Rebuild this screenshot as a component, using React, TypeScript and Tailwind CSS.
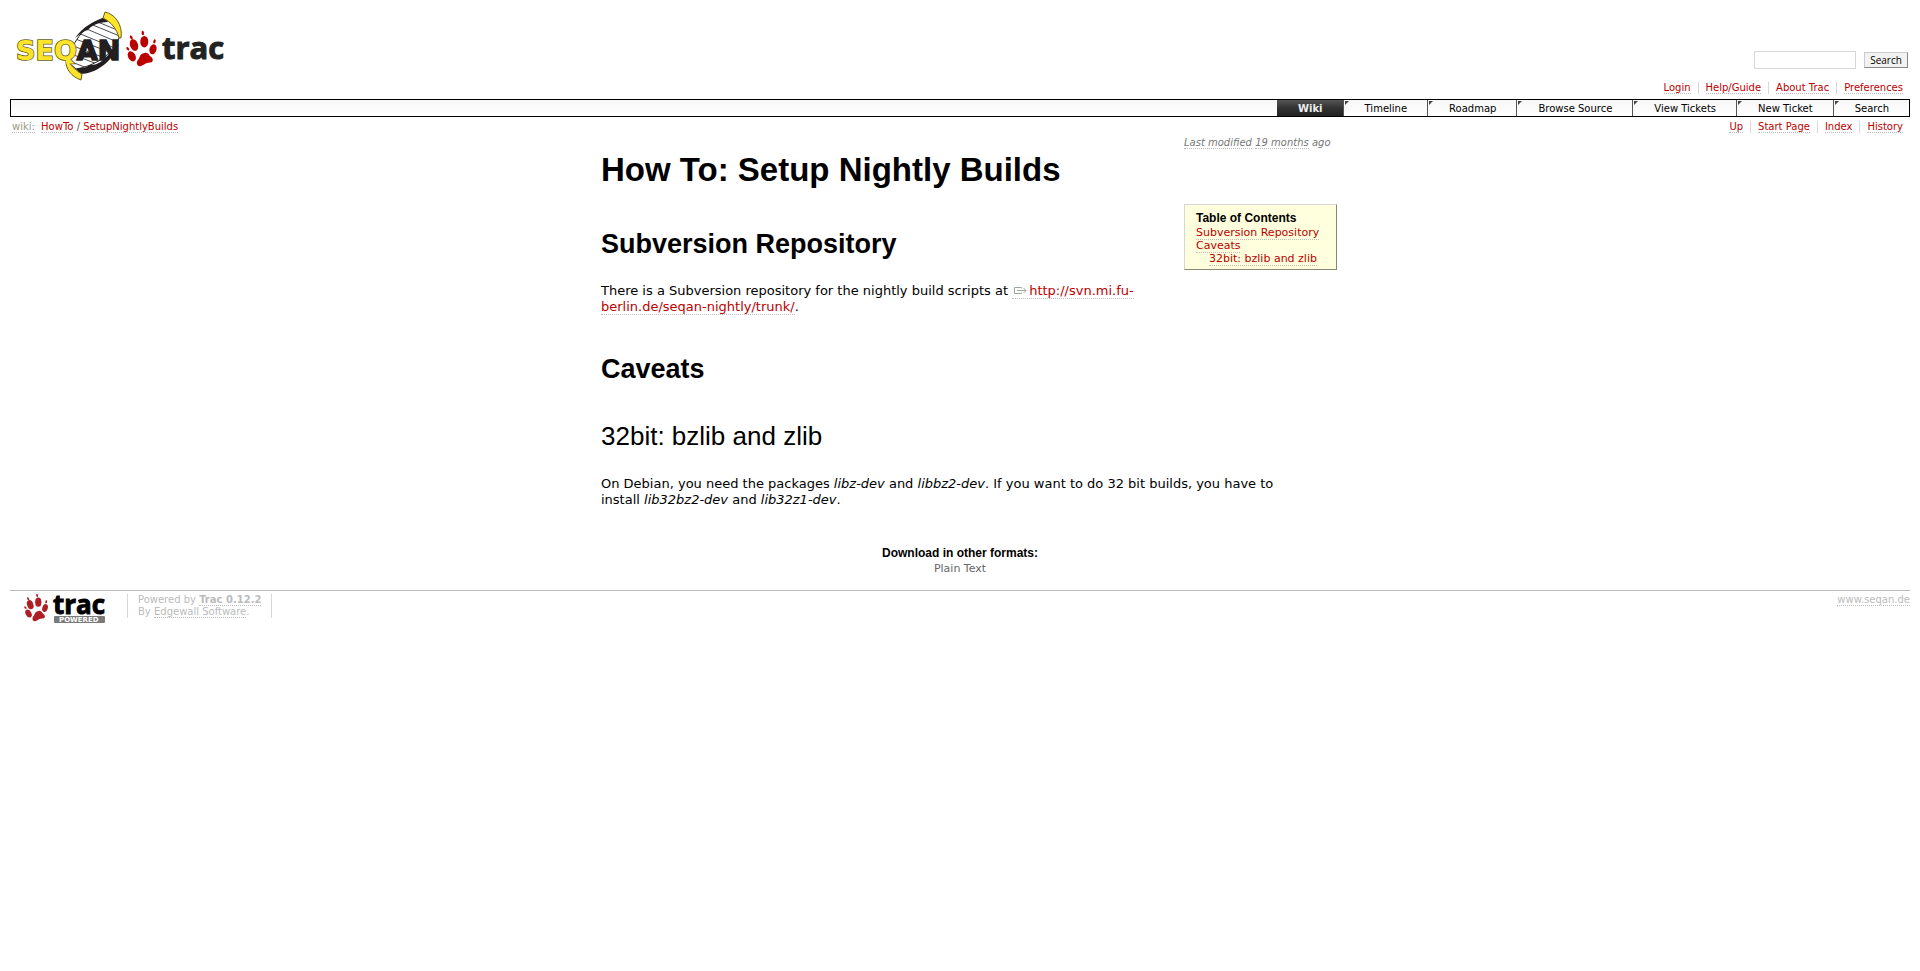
import type { ReactNode } from "react";

const heading = "font-['Liberation_Sans',Arial,sans-serif] text-black";

function Link({ children, className = "text-[#bb0000]", href = "#" }: { children: ReactNode; className?: string; href?: string }) {
  return (
    <a href={href} className={`border-b border-dotted border-[#bbbbbb] ${className}`}>
      {children}
    </a>
  );
}

function Paw() {
  return (
    <>
      <ellipse cx="5.8" cy="26.3" rx="3.7" ry="5.4" transform="rotate(-28 5.8 26.3)" />
      <ellipse cx="8" cy="15" rx="4" ry="6" transform="rotate(-20 8 15)" />
      <ellipse cx="18.3" cy="11.7" rx="4" ry="5.8" />
      <ellipse cx="27" cy="19.3" rx="3.5" ry="5.1" transform="rotate(16 27 19.3)" />
      <ellipse cx="1.8" cy="18.7" rx="1.1" ry="2" transform="rotate(-40 1.8 18.7)" />
      <ellipse cx="5.3" cy="7.4" rx="1.2" ry="2.1" transform="rotate(-30 5.3 7.4)" />
      <ellipse cx="16.8" cy="3" rx="1.2" ry="2.2" transform="rotate(-8 16.8 3)" />
      <ellipse cx="28.5" cy="11.4" rx="1.2" ry="2.1" transform="rotate(12 28.5 11.4)" />
      <path d="M18.5 23C20.600 22.300 22.500 23.500 23.400 25.200C24.200 26.700 27 27.600 26.800 30C26.600 32.300 25 32.600 22.500 32.800C19 33 17 35.800 14 36.200C11.500 36.400 10.400 34 11 31.800C11.600 29.800 13 29.200 13.600 27C14.200 24.700 16 23.600 18.500 23Z" />
    </>
  );
}

function SiteLogo() {
  return (
    <svg width="216" height="74" viewBox="10 8 216 74" role="img" aria-label="SeqAn Trac">
      <defs>
        <clipPath id="helix">
          <path d="M104 18C88 23 72 39 68 62L76 69C94 66 113 55 119 38L118 26Z" />
        </clipPath>
      </defs>
      <path d="M104 18C88 23 72 39 68 62L76 69C94 66 113 55 119 38L118 26Z" fill="#fff" stroke="#231f20" strokeWidth="1" />
      <g clipPath="url(#helix)" stroke="#231f20" strokeWidth=".8">
        <path d="M93 20 122 32M88 23 122 37M82 27 122 44M78 33 122 51M73 38 122 57M68 44 118 63M66 52 110 69M64 59 100 73" />
      </g>
      <path d="M106 18C94 20 83 27 75 38C80 34 84 31 88 30C91 26 98 22 108 22ZM76 69C80 67 86 69 89 65C97 66 104 60 109 54L119 44C112 62 96 74 80 74Z" fill="#231f20" />
      <path d="M105 12C115 14 123 25 121 38H119C117 29 111 22 103 18Z" fill="#fde428" stroke="#65601f" strokeWidth="1" />
      <path d="M66 60C70 64 74 70 82 74L81 80C72 77 65 69 66 60Z" fill="#fde428" stroke="#65601f" strokeWidth="1" />
      <text x="16" y="60" fontFamily="DejaVu Sans, sans-serif" fontWeight="700" fontSize="27" fill="#fde428" stroke="#65601f" strokeWidth="1.6" paintOrder="stroke">
        SEQ<tspan fill="#231f20" stroke="#231f20">AN</tspan>
      </text>
      <path d="M67 60C68 66 72 70 77 73" fill="none" stroke="#fde428" strokeWidth="3" />
      <g fill="#bb0000" transform="translate(126 30)">
        <Paw />
      </g>
      <text x="162" y="59" fontFamily="Open Sans, sans-serif" fontWeight="700" fontSize="31" fill="#222" stroke="#222" strokeWidth="1">
        trac
      </text>
    </svg>
  );
}

function PoweredLogo() {
  return (
    <svg width="85" height="30" viewBox="0 0 85 30" className="overflow-visible" role="img" aria-label="Trac Powered">
      <g fill="#ad1f24" transform="translate(2 -1) scale(.78)">
        <Paw />
      </g>
      <text x="31" y="20" fontFamily="Open Sans, sans-serif" fontWeight="700" fontSize="26" fill="#000" stroke="#000" strokeWidth=".9">
        trac
      </text>
      <rect x="32" y="22" width="51" height="7" rx="1" fill="#7b7b7b" />
      <text x="37" y="28" fontFamily="DejaVu Sans, sans-serif" fontWeight="700" fontSize="7" fill="#fff">
        POWERED
      </text>
    </svg>
  );
}

function LinkRow({ items, label }: { items: string[]; label: string }) {
  return (
    <nav aria-label={label}>
      <ul className="flex">
        {items.map((item, i) => (
          <li key={item} className={`px-[7px] leading-3 ${i ? "border-l border-[#d7d7d7]" : ""}`}>
            <Link>{item}</Link>
          </li>
        ))}
      </ul>
    </nav>
  );
}

const tabs = ["Wiki", "Timeline", "Roadmap", "Browse Source", "View Tickets", "New Ticket", "Search"];

export default function App() {
  return (
    <div className="px-[10px] pt-2 font-['DejaVu_Sans',Verdana,sans-serif] text-[13px] text-black">
      <header className="flex h-[91px] justify-between text-[10px]">
        <a href="#" className="self-start">
          <SiteLogo />
        </a>
        <div className="flex flex-col items-end justify-end">
          <form className="flex items-center gap-2 pr-[2px]" onSubmit={(e) => e.preventDefault()}>
            <input type="text" aria-label="Search text" className="h-[18px] w-[102px] border border-[#d7d7d7] bg-white px-1" />
            <button type="submit" className="h-4 w-11 border border-t-[#cccccc] border-r-[#888888] border-b-[#888888] border-l-[#cccccc] bg-[#f2f2f2] font-['Open_Sans',sans-serif] text-[10px] leading-3 text-black">
              Search
            </button>
          </form>
          <div className="pt-[13px] pb-[5px]">
            <LinkRow label="Account" items={["Login", "Help/Guide", "About Trac", "Preferences"]} />
          </div>
        </div>
      </header>

      <nav aria-label="Main" className="flex h-[18px] justify-end border border-black bg-linear-to-b from-[#f7f7f7] to-white text-[10px]">
        <ul className="flex">
          {tabs.map((tab, i) => (
            <li key={tab} className={`relative ${i === tabs.length - 1 ? "" : "border-r border-[#555555]"}`}>
              {i > 0 && (
                <svg width="4" height="4" className="absolute top-px left-px" aria-hidden="true">
                  <path d="M0 0H4L0 4Z" fill="#444" />
                </svg>
              )}
              <a href="#" className={`block h-4 pr-5 pl-[21px] leading-[17px] ${i ? "" : "bg-linear-to-b from-[#555555] via-[#333333] to-[#222222] font-bold text-[#eeeeee]"}`}>
                {tab}
              </a>
            </li>
          ))}
        </ul>
      </nav>

      <div className="flex justify-between pt-1 text-[10px]">
        <p className="pl-[2px] leading-3">
          <Link className="mr-[3px] text-[#999988]">wiki:</Link> <Link>HowTo</Link> <span className="text-[#555555]">/</span> <Link>SetupNightlyBuilds</Link>
        </p>
        <LinkRow label="Page" items={["Up", "Start Page", "Index", "History"]} />
      </div>

      <main className="mx-auto w-full max-w-[718px]">
        <div className="-mr-[18px] flex justify-end">
          <p className="w-[153px] pt-1 text-[10px] leading-3 whitespace-nowrap text-[#777777] italic">
            <Link className="">Last modified</Link> <Link className="">19 months</Link> ago
          </p>
        </div>
        <h1 className={`${heading} pt-[3px] pb-2 text-[33px] leading-9 font-bold`}>How To: Setup Nightly Builds</h1>
        <nav aria-label="Table of Contents" className="float-right mt-2 -mr-[18px] mb-4 ml-[15px] w-[153px] border border-t-[#d7d7d7] border-r-[#888877] border-b-[#888877] border-l-[#d7d7d7] bg-[#ffffdd] pt-[6px] pb-1 pl-[11px] text-[11px] leading-[13px] whitespace-nowrap">
          <h4 className={`${heading} text-[12px] leading-[15px] font-bold`}>Table of Contents</h4>
          <ol>
            <li>
              <Link>Subversion Repository</Link>
            </li>
            <li>
              <Link>Caveats</Link>
              <ol className="pl-[13px]">
                <li>
                  <Link>32bit: bzlib and zlib</Link>
                </li>
              </ol>
            </li>
          </ol>
        </nav>
        <h2 className={`${heading} pt-8 text-[27px] leading-8 font-bold`}>Subversion Repository</h2>
        <p className="pt-[23px] leading-4">
          There is a Subversion repository for the nightly build scripts at{" "}
          <Link href="http://svn.mi.fu-berlin.de/seqan-nightly/trunk/">
            <svg width="17" height="9" viewBox="0 0 17 9" className="inline-block align-baseline" fill="none" stroke="#9aaa9a" aria-hidden="true">
              <path d="M9.500 2.500V1.500H2.500V7.500H9.500V6.500M5 4.500H14M11.500 2 14 4.500 11.500 7" />
            </svg>
            http://svn.mi.fu-berlin.de/seqan-nightly/trunk/
          </Link>
          .
        </p>
        <h2 className={`${heading} pt-[38px] text-[27px] leading-8 font-bold`}>Caveats</h2>
        <h3 className={`${heading} pt-[35px] text-[26px] leading-8`}>32bit: bzlib and zlib</h3>
        <p className="pt-6 pr-8 leading-4">
          On Debian, you need the packages <i>libz-dev</i> and <i>libbz2-dev</i>. If you want to do 32 bit builds, you have to install <i>lib32bz2-dev</i> and <i>lib32z1-dev</i>.
        </p>
      </main>

      <section className="pt-[37px] pb-[13px] text-center">
        <h3 className={`${heading} text-[12px] leading-4 font-bold`}>Download in other formats:</h3>
        <a href="#" className="block text-[11px] leading-4 text-[#666666]">
          Plain Text
        </a>
      </section>

      <footer className="flex items-start border-t border-[#bbbbbb] pt-[3px] text-[10px] leading-3 text-[#bbbbbb]">
        <a href="#" className="pl-3">
          <PoweredLogo />
        </a>
        <p className="ml-5 border-x border-[#d7d7d7] px-[10px]">
          Powered by <Link className="font-bold">Trac 0.12.2</Link>
          <br />
          By <Link className="">Edgewall Software</Link>.
        </p>
        <p className="ml-auto">
          <Link className="">www.seqan.de</Link>
        </p>
      </footer>
    </div>
  );
}
